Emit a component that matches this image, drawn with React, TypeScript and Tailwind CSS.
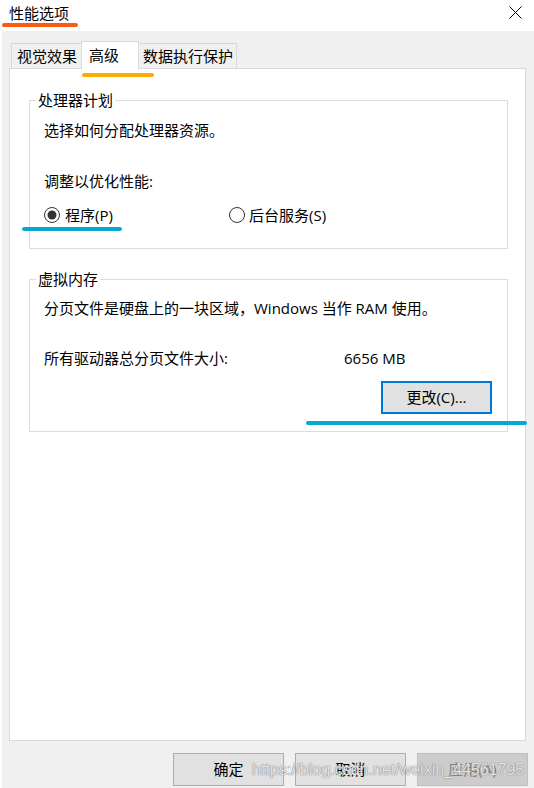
import { ReactNode } from "react";

const font = "font-['Open_Sans','Noto_Sans_CJK_SC',sans-serif]";

function Radio({ checked }: { checked?: boolean }) {
  return (
    <svg width="16" height="16" viewBox="0 0 16 16" className="shrink-0">
      <circle cx="8" cy="8" r="7.5" fill="#fff" stroke="#333" strokeWidth="1" />
      {checked && <circle cx="8" cy="8" r="4.5" fill="#333" />}
    </svg>
  );
}

function Group({ title, children }: { title: string; children: ReactNode }) {
  return (
    <fieldset className="w-[479px] border border-[#dcdcdc]">
      <legend className="ml-[6px] px-[2px] leading-[20px]">{title}</legend>
      {children}
    </fieldset>
  );
}

function DialogButton({ label, disabled }: { label: string; disabled?: boolean }) {
  return (
    <div
      className={
        disabled
          ? "w-[111px] h-[33px] flex items-center justify-center border border-[#bfbfbf] bg-[#cccccc] text-[#838383]"
          : "w-[111px] h-[33px] flex items-center justify-center border border-[#adadad] bg-[#e1e1e1]"
      }
    >
      {label}
    </div>
  );
}

export default function App() {
  return (
    <div className={`relative w-[534px] h-[788px] overflow-hidden bg-white text-black text-[15px] ${font}`}>
      {/* title bar */}
      <div className="h-[31px] flex justify-between items-start">
        <span className="ml-[9px] mt-[3px] leading-[20px]">性能选项</span>
        <svg width="13" height="13" viewBox="0 0 13 13" className="mt-[6px] mr-[12px]">
          <path d="M0.5 0.5 L12.5 12.5 M12.5 0.5 L0.5 12.5" stroke="#000" strokeWidth="1" />
        </svg>
      </div>

      <div className="ml-[2px] h-[757px] bg-[#f0f0f0] pt-[10px] pl-[7px] pr-[8px] flex flex-col">
        {/* tabs */}
        <div className="h-[27px] pl-[2px] flex items-end relative z-10">
          <div className="w-[70px] h-[25px] border-t border-l border-[#d9d9d9] pl-[5px] leading-[24px]">视觉效果</div>
          <div className="w-[58px] h-[28px] -mb-px border-t border-l border-r border-[#d9d9d9] bg-white pl-[7px] leading-[26px]">高级</div>
          <div className="w-[98px] h-[25px] border-t border-r border-[#d9d9d9] pl-[4px] leading-[24px]">数据执行保护</div>
        </div>

        {/* tab panel */}
        <div className="h-[673px] border border-[#d9d9d9] bg-white pt-[21px] pl-[19px]">
          <Group title="处理器计划">
            <div className="pt-[10px] pb-[23px] pl-[14px]">
              <div className="leading-[20px]">选择如何分配处理器资源。</div>
              <div className="mt-[31px] leading-[20px]">调整以优化性能:</div>
              <div className="mt-[14px] h-[20px] flex items-center">
                <div className="w-[185px] flex items-center gap-[5px]">
                  <Radio checked />
                  <span className="leading-[20px]">程序(P)</span>
                </div>
                <div className="flex items-center gap-[4px]">
                  <Radio />
                  <span className="leading-[20px]">后台服务(S)</span>
                </div>
              </div>
            </div>
          </Group>

          <div className="mt-[20px]">
            <Group title="虚拟内存">
              <div className="pt-[9px] pb-[17px] pl-[14px]">
                <div className="leading-[20px]">分页文件是硬盘上的一块区域，Windows 当作 RAM 使用。</div>
                <div className="mt-[30px] flex leading-[20px]">
                  <span className="w-[300px]">所有驱动器总分页文件大小:</span>
                  <span>6656 MB</span>
                </div>
                <div className="mt-[13px] flex justify-end pr-[15px]">
                  <div className="w-[111px] h-[33px] flex items-center justify-center border-2 border-[#0078d7] bg-[#e1e1e1]">
                    更改(C)...
                  </div>
                </div>
              </div>
            </Group>
          </div>
        </div>

        {/* dialog buttons */}
        <div className="mt-[12px] -mr-[2px] flex justify-end gap-[11px]">
          <DialogButton label="确定" />
          <DialogButton label="取消" />
          <DialogButton label="应用(A)" disabled />
        </div>
      </div>

      {/* annotation marks */}
      <div className="absolute left-[2px] top-[23px] w-[76px] h-[4px] rounded-full bg-[#fa5a10]" />
      <div className="absolute left-[82px] top-[73px] w-[72px] h-[4px] rounded-full bg-[#ffab00]" />
      <div className="absolute left-[22px] top-[227px] w-[100px] h-[4px] rounded-full bg-[#07a8cf]" />
      <div className="absolute left-[306px] top-[421px] w-[221px] h-[4px] rounded-full bg-[#07a8cf]" />

      {/* watermark */}
      <div className="absolute left-[252px] top-[760px] font-['Liberation_Sans',sans-serif] text-[16px] leading-[20px] text-white/80 [text-shadow:0_0_1px_#777,0_0_1px_#777]">
        https://blog.csdn.net/weixin_44561795
      </div>
    </div>
  );
}
